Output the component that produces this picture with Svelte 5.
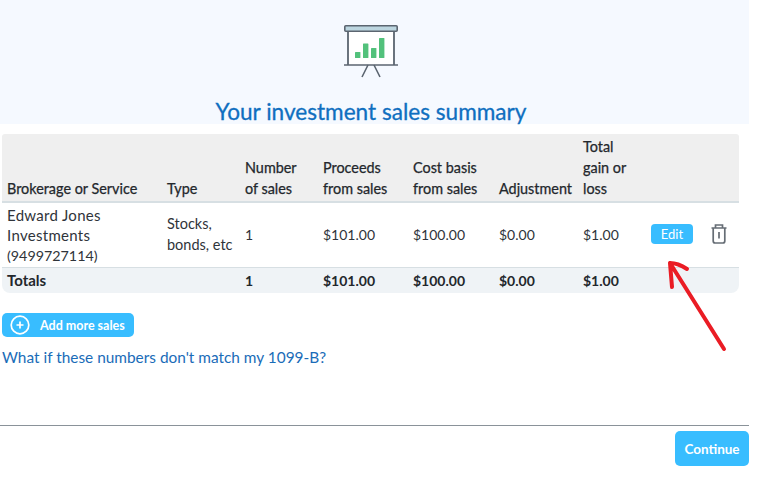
<script lang="ts">
  const headers = [
    "Brokerage or Service",
    "Type",
    "Number of sales",
    "Proceeds from sales",
    "Cost basis from sales",
    "Adjustment",
    "Total gain or loss",
  ];
</script>

<div class="page">
  <header class="hero">
    <svg class="board" width="56" height="56" viewBox="0 0 56 56" aria-hidden="true">
      <rect x="5" y="6" width="46" height="35" fill="#fff" />
      <rect x="1.800" y="1.800" width="52.400" height="5.400" rx="1" fill="#bcd6e0" stroke="#5b6570" stroke-width="1.600" />
      <path d="M5 7v34M51 7v34" stroke="#5b6570" stroke-width="1.800" fill="none" />
      <path d="M1 41h54" stroke="#5b6570" stroke-width="1.600" fill="none" />
      <path d="M25 41l-6 12M31 41l6 12" stroke="#5b6570" stroke-width="1.600" fill="none" />
      <rect x="12" y="28" width="5.400" height="6" rx=".6" fill="#52c17b" />
      <rect x="20" y="19.500" width="5.400" height="14.500" rx=".6" fill="#52c17b" />
      <rect x="28" y="24" width="5.400" height="10" rx=".6" fill="#52c17b" />
      <rect x="36" y="14" width="5.400" height="20" rx=".6" fill="#52c17b" />
    </svg>
    <h1>Your investment sales summary</h1>
  </header>

  <table class="sales">
    <colgroup>
      <col style="width: 160px" />
      <col style="width: 78px" />
      <col style="width: 78px" />
      <col style="width: 90px" />
      <col style="width: 86px" />
      <col style="width: 84px" />
      <col style="width: 68px" />
      <col />
    </colgroup>
    <thead>
      <tr>
        {#each headers as h}
          <th>{h}</th>
        {/each}
        <th></th>
      </tr>
    </thead>
    <tbody>
      <tr>
        <td class="broker">Edward Jones Investments <span>(9499727114)</span></td>
        <td class="type">Stocks, bonds, etc</td>
        <td>1</td>
        <td>$101.00</td>
        <td>$100.00</td>
        <td>$0.00</td>
        <td>$1.00</td>
        <td>
          <div class="actions">
            <button class="edit">Edit</button>
            <svg width="16" height="20" viewBox="0 0 16 20" aria-hidden="true" fill="none" stroke="#666d75" stroke-width="1.700">
              <path d="M0.500 4h15M4.500 4V1h7v3M2.200 4v13q0 2 2 2h7.600q2 0 2-2V4M8 8v6.500" />
            </svg>
          </div>
        </td>
      </tr>
    </tbody>
    <tfoot>
      <tr>
        <td class="label">Totals</td>
        <td></td>
        <td>1</td>
        <td>$101.00</td>
        <td>$100.00</td>
        <td>$0.00</td>
        <td>$1.00</td>
        <td></td>
      </tr>
    </tfoot>
  </table>

  <button class="add">
    <svg width="20" height="20" viewBox="0 0 20 20" aria-hidden="true" fill="none" stroke="#fff">
      <circle cx="10" cy="10" r="8.800" stroke-width="1.700" />
      <path d="M10 6.500v7M6.500 10h7" stroke-width="1.700" />
    </svg>
    Add more sales
  </button>

  <p class="help">What if these numbers don't match my 1099-B?</p>

  <footer class="foot">
    <button class="continue">Continue</button>
  </footer>

  <svg class="arrow" width="70" height="100" viewBox="0 0 70 100" aria-hidden="true" fill="none" stroke="#ea1c24" stroke-width="4" stroke-linecap="round" stroke-linejoin="round">
    <path d="M64 92L10 6M12 30L10 6Q18 6 27 12" />
  </svg>
</div>

<style>
  :global(body) {
    margin: 0;
    background: #fff;
  }

  .page {
    position: relative;
    width: 749px;
    height: 489px;
    font-family: Lato, "Open Sans", sans-serif;
    font-size: 14px;
    color: #2f343a;
  }

  .hero {
    height: 124px;
    background: #f5f9ff;
    display: flex;
    flex-direction: column;
    align-items: center;
    box-sizing: border-box;
    padding-top: 24px;
  }

  .board {
    display: block;
    flex-shrink: 0;
    margin-right: 7px;
  }

  h1 {
    flex-shrink: 0;
    margin: 19px 7px 0 0;
    font-size: 22.600px;
    line-height: 26px;
    font-weight: 400;
    color: #0f6fc0;
    -webkit-text-stroke: 0.3px #0f6fc0;
  }

  .sales {
    table-layout: fixed;
    width: 737px;
    margin: 10px 0 0 2px;
    border-collapse: separate;
    border-spacing: 0;
    line-height: 21px;
  }

  th {
    background: #efefef;
    font-size: 14.400px;
    font-weight: 400;
    -webkit-text-stroke: 0.25px #23272c;
    text-align: left;
    vertical-align: bottom;
    padding: 2px 14px 2px 5px;
    border-bottom: 2px solid #d7dfe3;
    color: #23272c;
  }

  th:nth-child(6) {
    white-space: nowrap;
  }

  th:first-child {
    border-top-left-radius: 3px;
  }

  th:last-child {
    border-top-right-radius: 3px;
  }

  tbody td {
    padding: 1px 5px 3px;
    vertical-align: middle;
    height: 60px;
  }

  tbody td.broker {
    padding: 2px 5px;
    font-size: 15px;
    line-height: 20px;
    letter-spacing: 0.3px;
  }

  .broker span {
    font-size: 14.300px;
    line-height: 1;
    letter-spacing: 0;
  }

  .type {
    font-size: 14.500px;
  }

  tfoot td {
    background: #eff3f6;
    border-top: 1px solid #d7dfe3;
    font-weight: 700;
    padding: 2px 5px;
    color: #23272c;
  }

  tfoot .label {
    font-size: 15px;
  }

  tfoot td:first-child {
    border-bottom-left-radius: 8px;
  }

  tfoot td:last-child {
    border-bottom-right-radius: 8px;
  }

  .actions {
    display: flex;
    align-items: center;
    gap: 18px;
  }

  button {
    border: none;
    color: #fff;
    background: #38bdff;
    font-family: inherit;
    padding: 0;
  }

  .edit {
    width: 42px;
    height: 20px;
    border-radius: 4px;
    font-size: 13px;
    line-height: 20px;
  }

  .add {
    display: flex;
    align-items: center;
    gap: 10px;
    margin: 20px 0 0 2px;
    width: 132px;
    height: 24px;
    padding-left: 8px;
    border-radius: 5px;
    font-size: 12.500px;
    font-weight: 700;
    box-sizing: border-box;
  }

  .help {
    margin: 10px 0 0 2px;
    font-size: 15.400px;
    line-height: 20px;
    color: #1a6cb8;
  }

  .foot {
    margin-top: 58px;
    border-top: 1px solid #8a9299;
    display: flex;
    justify-content: flex-end;
    padding-top: 5px;
  }

  .continue {
    width: 74px;
    height: 35px;
    border-radius: 5px;
    font-size: 13.500px;
    font-weight: 700;
  }

  .arrow {
    position: absolute;
    left: 660px;
    top: 257px;
  }
</style>
